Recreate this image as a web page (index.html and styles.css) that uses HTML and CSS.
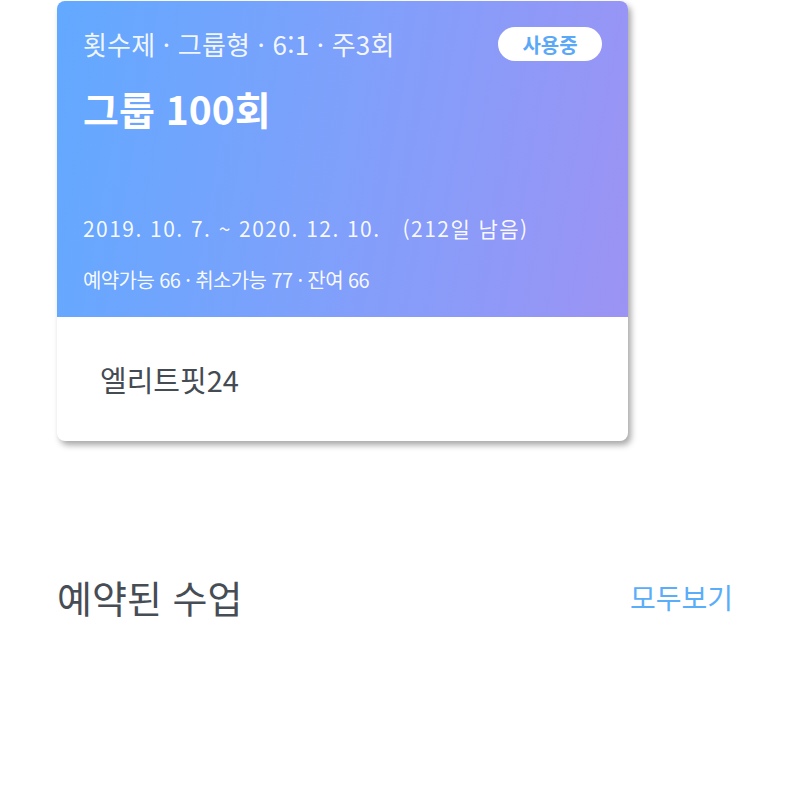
FILE: index.html
```html
<!DOCTYPE html>
<html lang="ko">
<head>
<meta charset="utf-8">
<link rel="stylesheet" href="styles.css">
</head>
<body>
<div class="page">
  <div class="card">
    <div class="card-top">
      <div class="top-row">
        <div class="meta">횟수제 · 그룹형 · 6:1 · 주3회</div>
        <div class="badge">사용중</div>
      </div>
      <div class="title">그룹 100회</div>
      <div class="spacer"></div>
      <div class="period">2019. 10. 7. ~ 2020. 12. 10. &nbsp; (212일 남음)</div>
      <div class="counts">예약가능 66 · 취소가능 77 · 잔여 66</div>
    </div>
    <div class="card-bottom">
      <div class="gym">엘리트핏24</div>
    </div>
  </div>
  <div class="section-head">
    <div class="section-title">예약된 수업</div>
    <div class="section-link">모두보기</div>
  </div>
</div>
</body>
</html>
```

FILE: styles.css
```css
html, body {
  margin: 0;
  padding: 0;
  background: #ffffff;
  font-family: "Noto Sans CJK KR", "Noto Sans", sans-serif;
}
.page {
  width: 800px;
  height: 800px;
  padding-top: 1px;
  box-sizing: border-box;
}
.card {
  margin-left: 57px;
  width: 571px;
  height: 440px;
  border-radius: 8px;
  background: #ffffff;
  box-shadow: 3px 4px 6px rgba(0, 0, 0, 0.35);
  overflow: hidden;
  display: flex;
  flex-direction: column;
}
.card-top {
  height: 316px;
  box-sizing: border-box;
  padding: 26px 26px 0 26px;
  background: linear-gradient(100deg, #62a9ff 0%, #7fa0fb 50%, #9c93f4 100%);
  color: #ffffff;
  display: flex;
  flex-direction: column;
}
.top-row {
  display: flex;
  justify-content: space-between;
  align-items: center;
}
.meta {
  font-size: 26px;
  line-height: 34px;
  letter-spacing: 0.2px;
  color: rgba(255, 255, 255, 0.92);
}
.badge {
  width: 104px;
  height: 34px;
  border-radius: 17px;
  background: #ffffff;
  color: #5ba8f7;
  font-size: 20px;
  font-weight: 700;
  display: flex;
  align-items: center;
  justify-content: center;
}
.title {
  margin-top: 22px;
  font-size: 39px;
  font-weight: 700;
  line-height: 50px;
}
.spacer {
  flex: 1;
}
.period {
  font-size: 21px;
  line-height: 28px;
  letter-spacing: 1.45px;
  color: rgba(255, 255, 255, 0.95);
  white-space: pre;
}
.counts {
  margin-top: 25px;
  margin-bottom: 24px;
  font-size: 20px;
  line-height: 26px;
  letter-spacing: -0.6px;
  color: rgba(255, 255, 255, 0.95);
}
.card-bottom {
  flex: 1;
  display: flex;
  align-items: center;
  padding-left: 43px;
}
.gym {
  font-size: 29px;
  color: #454b53;
}
.section-head {
  margin-top: 132px;
  padding: 0 67px 0 57px;
  display: flex;
  justify-content: space-between;
  align-items: center;
}
.section-title {
  font-size: 38px;
  color: #474d55;
  line-height: 48px;
}
.section-link {
  font-size: 28px;
  color: #5aadf9;
}
```
